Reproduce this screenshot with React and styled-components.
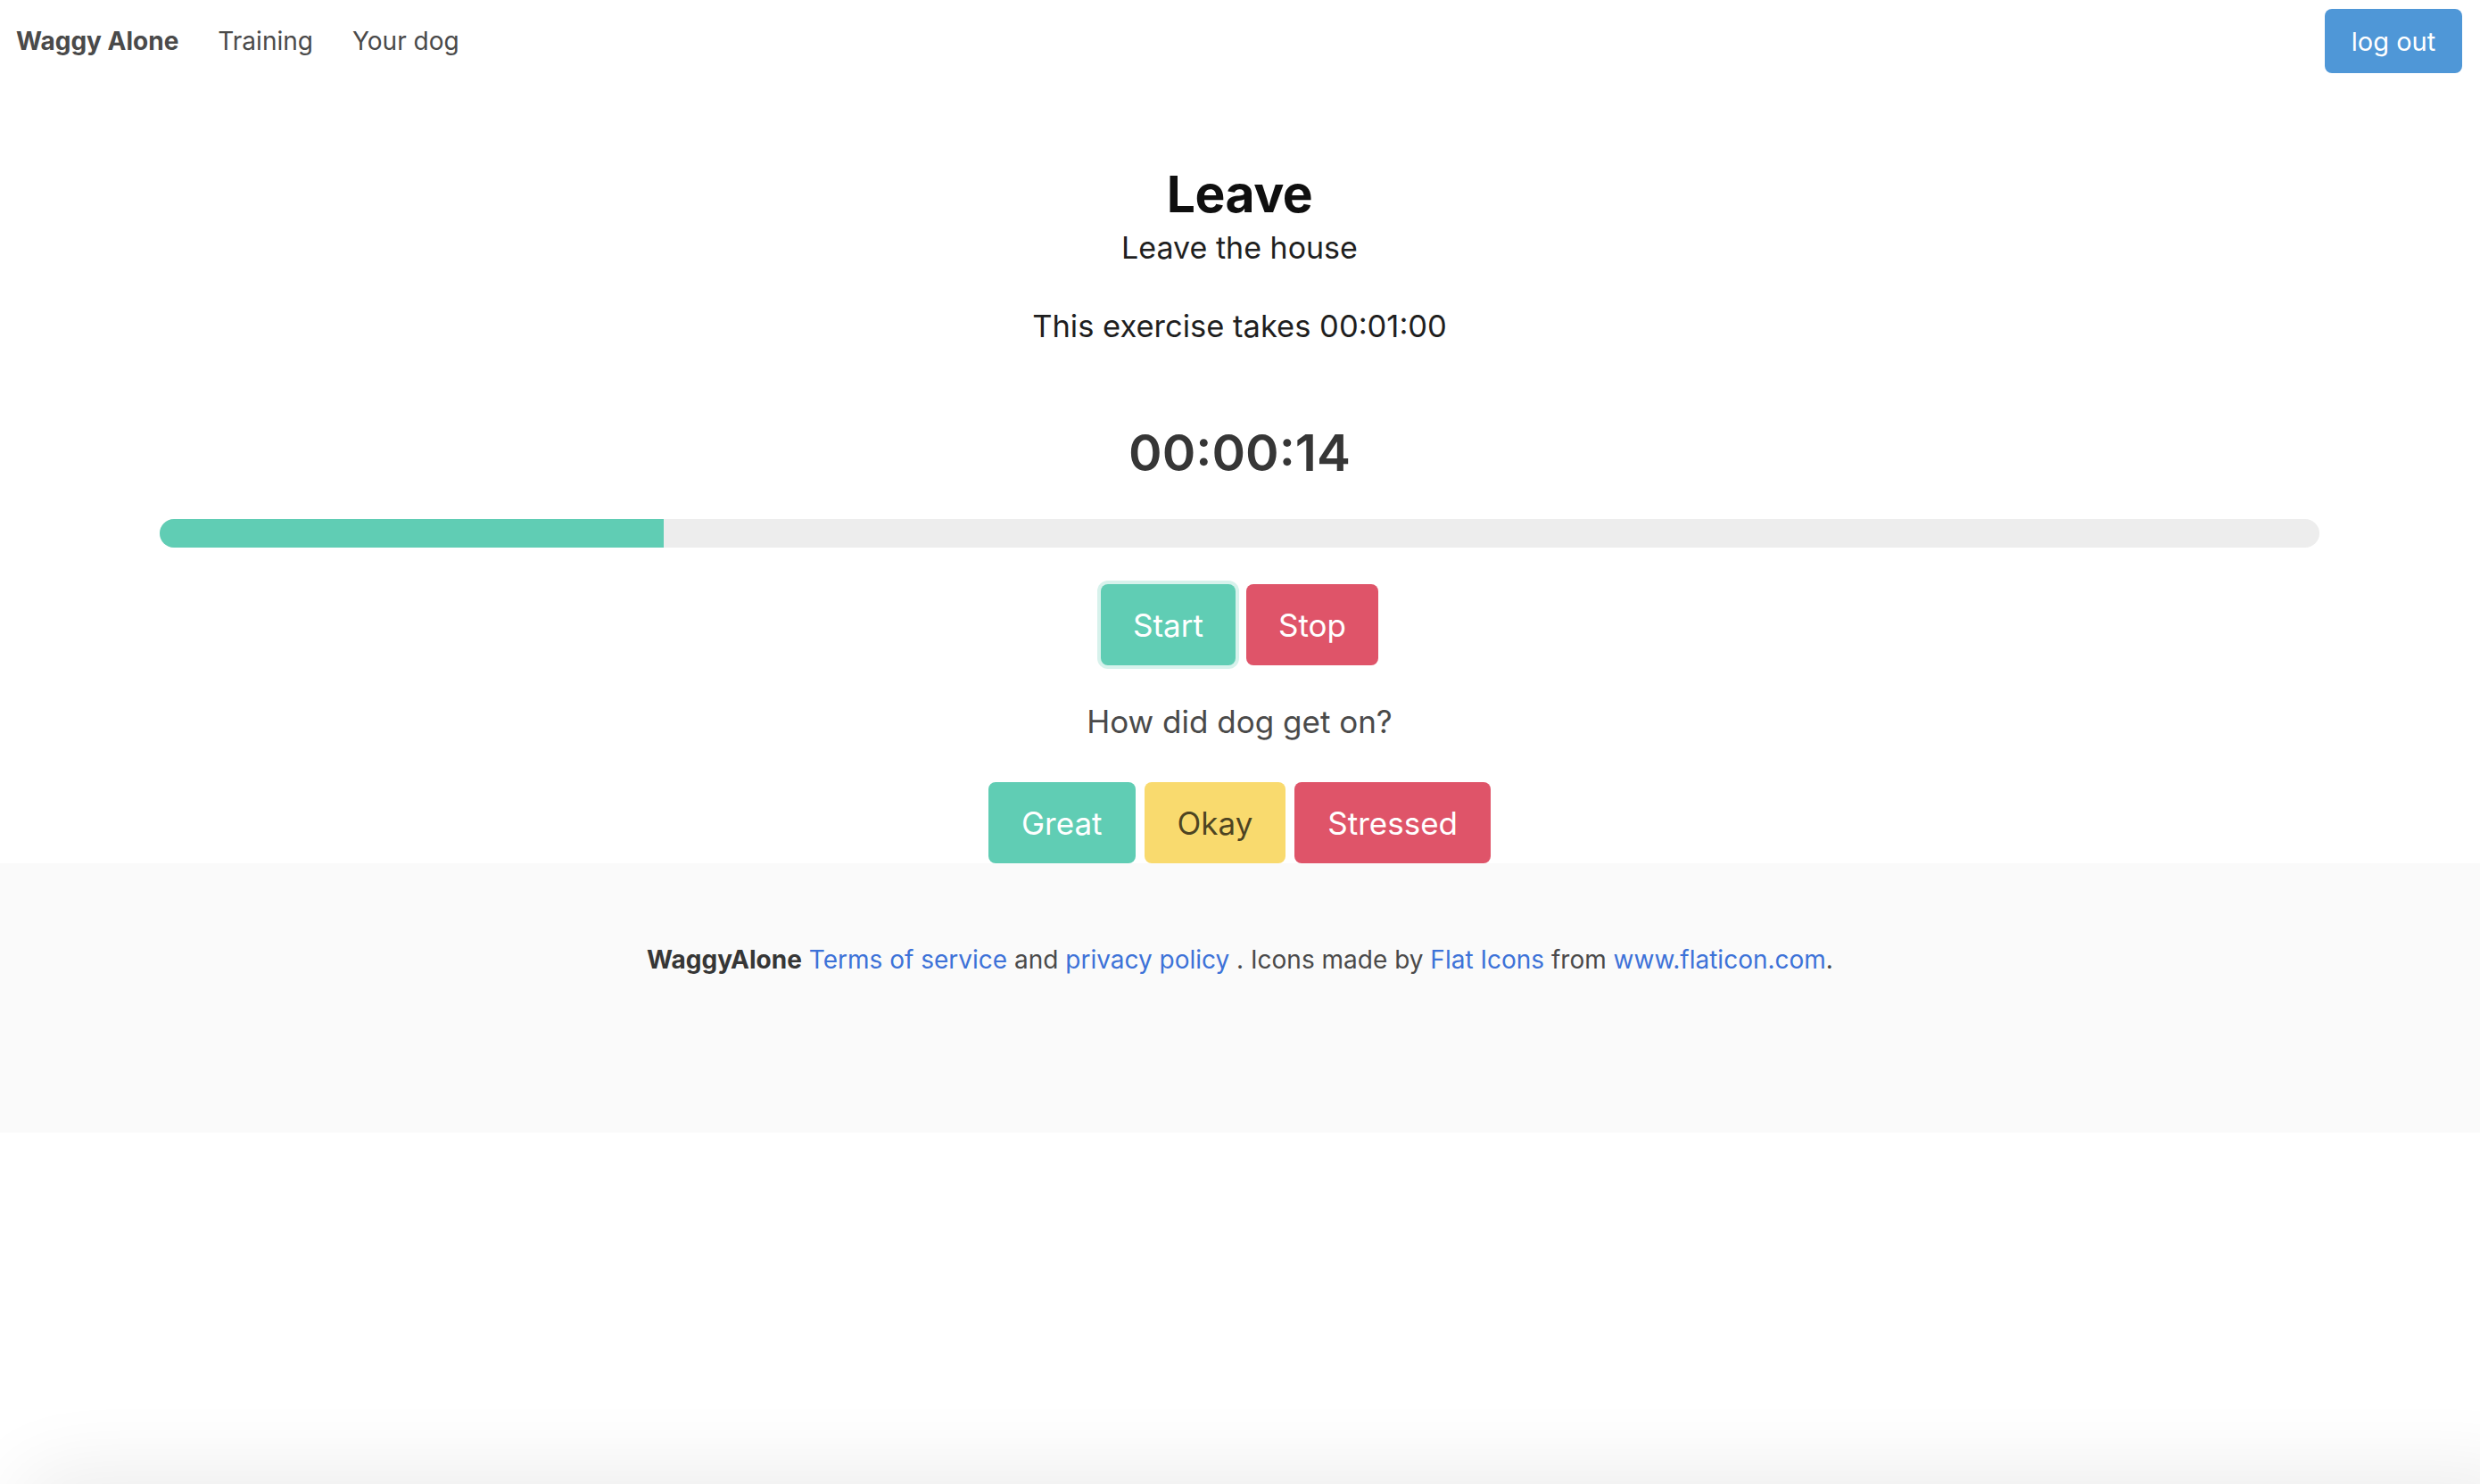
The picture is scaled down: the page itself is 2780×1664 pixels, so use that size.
import React from 'react';
import styled, { createGlobalStyle, css } from 'styled-components';

const GlobalStyle = createGlobalStyle`
  html, body {
    margin: 0;
    padding: 0;
    background: #ffffff;
  }
  body {
    font-family: Inter, "Noto Sans", sans-serif;
    font-size: 32px;
    line-height: 1.5;
    color: #4a4a4a;
  }
  * {
    box-sizing: border-box;
  }
`;

const colors = {
  primary: '#60cdb4',
  danger: '#df5469',
  warning: '#f9da6e',
  info: '#4f97d7',
};

const Navbar = styled.nav`
  display: flex;
  align-items: center;
  height: 92px;
  padding: 0 20px 0 18px;
`;

const NavItem = styled.a`
  color: #4a4a4a;
  font-size: 28px;
  text-decoration: none;
  margin-right: 44px;
  font-weight: ${props => (props.$brand ? 700 : 400)};
`;

const NavEnd = styled.div`
  margin-left: auto;
  display: flex;
  align-items: center;
`;

const LogoutButton = styled.button`
  height: 72px;
  width: 154px;
  border: none;
  border-radius: 8px;
  background: ${colors.info};
  color: #ffffff;
  font-family: inherit;
  font-size: 29px;
  cursor: pointer;
`;

const Main = styled.main`
  display: flex;
  flex-direction: column;
  align-items: center;
  text-align: center;
  padding: 90px 180px 0 179px;
`;

const Title = styled.h1`
  margin: 0;
  font-size: 57px;
  line-height: 72px;
  font-weight: 700;
  letter-spacing: -0.5px;
  color: #0f0f0f;
`;

const Subtitle = styled.h2`
  margin: 0;
  font-size: 34px;
  line-height: 48px;
  font-weight: 400;
  color: #1f1f1f;
`;

const Duration = styled.p`
  margin: 36px 0 0;
  font-size: 34.5px;
  line-height: 56px;
  color: #1f1f1f;
`;

const Timer = styled.div`
  margin-top: 74px;
  font-size: 57px;
  line-height: 80px;
  font-weight: 600;
  color: #363636;
`;

const Progress = styled.div`
  margin-top: 34px;
  width: 100%;
  height: 32px;
  border-radius: 16px;
  background: #ededed;
  overflow: hidden;
`;

const ProgressFill = styled.div`
  height: 100%;
  background: ${colors.primary};
`;

const ButtonRow = styled.div`
  display: flex;
  gap: ${props => props.$gap || 10}px;
  margin-top: ${props => props.$top || 0}px;
`;

const Button = styled.button`
  height: 91px;
  padding: 0 ${props => props.$pad || 37}px;
  border: none;
  border-radius: 8px;
  font-family: inherit;
  font-size: 35px;
  cursor: pointer;
  background: ${props => colors[props.$kind]};
  color: ${props => (props.$kind === 'warning' ? 'rgba(0, 0, 0, 0.7)' : '#ffffff')};
  ${props =>
    props.$focused &&
    css`
      box-shadow: 0 0 0 4px rgba(96, 205, 180, 0.25);
    `}
`;

const Question = styled.p`
  margin: 36px 0 0;
  font-size: 35px;
  line-height: 54px;
  color: #4a4a4a;
`;

const Footer = styled.footer`
  background: #fafafa;
  height: 302px;
  padding-top: 84px;
  text-align: center;
  font-size: 28px;
  line-height: 48px;
  color: #4a4a4a;
`;

const Strong = styled.strong`
  color: #363636;
  font-weight: 700;
`;

const Link = styled.a`
  color: #3d72d8;
  text-decoration: none;
`;

const BottomShade = styled.div`
  position: fixed;
  left: 30px;
  right: -40px;
  bottom: -60px;
  height: 60px;
  border-radius: 40px 0 0 0;
  box-shadow: 0 0 90px 10px rgba(0, 0, 0, 0.09);
  pointer-events: none;
`;

const App = () => {
  const elapsed = 14;
  const total = 60;

  return (
    <>
      <GlobalStyle />
      <Navbar>
        <NavItem $brand href="#">Waggy Alone</NavItem>
        <NavItem href="#">Training</NavItem>
        <NavItem href="#">Your dog</NavItem>
        <NavEnd>
          <LogoutButton>log out</LogoutButton>
        </NavEnd>
      </Navbar>

      <Main>
        <Title>Leave</Title>
        <Subtitle>Leave the house</Subtitle>
        <Duration>This exercise takes 00:01:00</Duration>
        <Timer>00:00:14</Timer>
        <Progress>
          <ProgressFill style={{ width: `${(elapsed / total) * 100}%` }} />
        </Progress>
        <ButtonRow $top={41} $gap={12}>
          <Button $kind="primary" $pad={36} $focused>Start</Button>
          <Button $kind="danger" $pad={36}>Stop</Button>
        </ButtonRow>
        <Question>How did dog get on?</Question>
        <ButtonRow $top={41}>
          <Button $kind="primary">Great</Button>
          <Button $kind="warning">Okay</Button>
          <Button $kind="danger">Stressed</Button>
        </ButtonRow>
      </Main>

      <Footer>
        <Strong>WaggyAlone</Strong> <Link href="#">Terms of service</Link> and{' '}
        <Link href="#">privacy policy</Link> . Icons made by <Link href="#">Flat Icons</Link> from{' '}
        <Link href="#">www.flaticon.com</Link>.
      </Footer>

      <BottomShade />
    </>
  );
};

export default App;
